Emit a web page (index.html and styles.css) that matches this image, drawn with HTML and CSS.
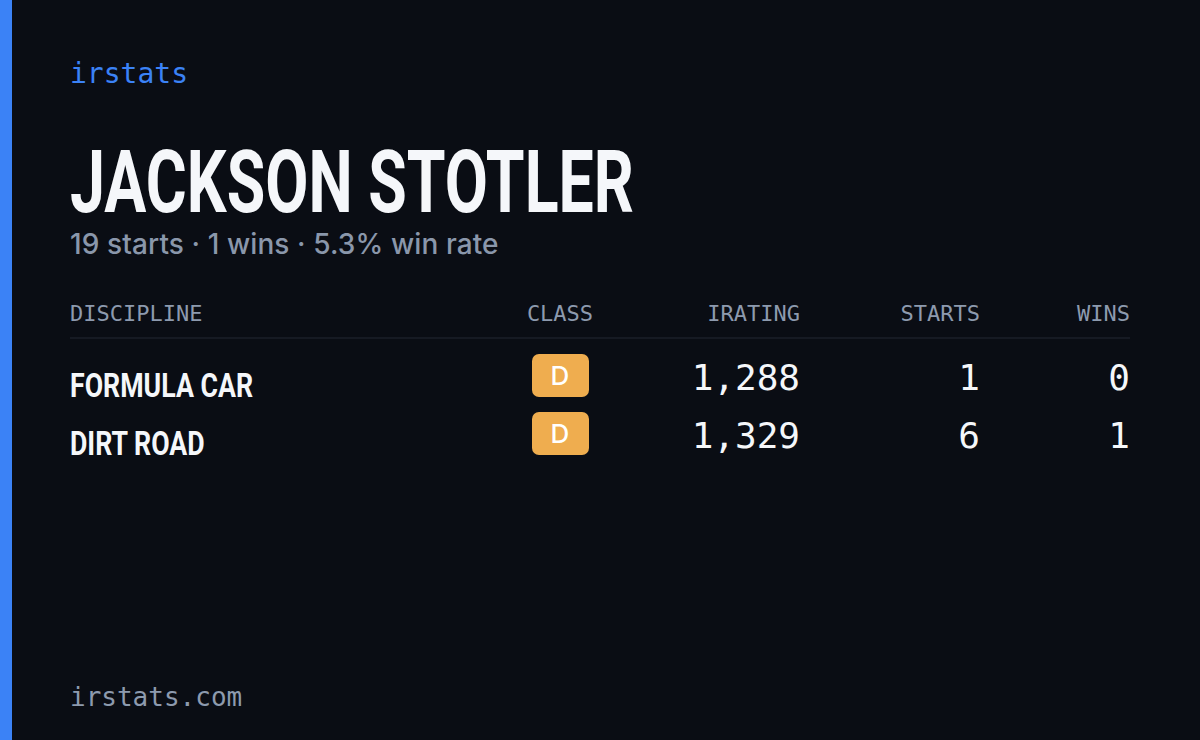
FILE: index.html
```html
<!DOCTYPE html>
<html lang="en">
<head>
<meta charset="utf-8">
<title>irstats — Jackson Stotler</title>
<link rel="stylesheet" href="styles.css">
</head>
<body>
<div class="card">
  <div class="accent"></div>
  <main class="content">
    <div class="logo">irstats</div>
    <h1 class="name"><span class="cond">JACKSON STOTLER</span></h1>
    <p class="summary">19 starts · 1 wins · 5.3% win rate</p>

    <div class="table">
      <div class="row head">
        <div class="cell">DISCIPLINE</div>
        <div class="cell center">CLASS</div>
        <div class="cell right">IRATING</div>
        <div class="cell right">STARTS</div>
        <div class="cell right">WINS</div>
      </div>
      <div class="body">
        <div class="row">
          <div class="cell disc"><span class="cond">FORMULA CAR</span></div>
          <div class="cell center"><span class="badge">D</span></div>
          <div class="cell right num">1,288</div>
          <div class="cell right num">1</div>
          <div class="cell right num">0</div>
        </div>
        <div class="row">
          <div class="cell disc"><span class="cond">DIRT ROAD</span></div>
          <div class="cell center"><span class="badge">D</span></div>
          <div class="cell right num">1,329</div>
          <div class="cell right num">6</div>
          <div class="cell right num">1</div>
        </div>
      </div>
    </div>

    <div class="footer">irstats.com</div>
  </main>
</div>
</body>
</html>
```

FILE: styles.css
```css
* { box-sizing: border-box; }

html, body {
  margin: 0;
  padding: 0;
  background: #0a0d14;
}

.card {
  width: 1200px;
  height: 740px;
  display: flex;
  background: #0a0d14;
  overflow: hidden;
}

.accent {
  width: 12px;
  flex: 0 0 12px;
  background: #3b82f6;
}

.content {
  flex: 1;
  display: flex;
  flex-direction: column;
  padding: 58px 70px 27px 58px;
}

.logo {
  font-family: "DejaVu Sans Mono", monospace;
  font-size: 28px;
  line-height: 32px;
  color: #3b82f6;
}

.name {
  margin: 49px 0 0;
  font-family: Roboto, "Liberation Sans", sans-serif;
  font-weight: 700;
  font-size: 87px;
  line-height: 87px;
  color: #f5f7fa;
  white-space: nowrap;
}

.cond {
  display: inline-block;
  transform: scaleX(0.72);
  transform-origin: left center;
  white-space: nowrap;
}

.summary {
  margin: 2px 0 0;
  font-family: Inter, "Noto Sans", sans-serif;
  font-weight: 500;
  font-size: 28px;
  line-height: 32px;
  letter-spacing: 0.1px;
  color: #8a97ab;
}

.table {
  margin-top: 41px;
}

.row {
  display: grid;
  grid-template-columns: 430px 120px 180px 180px 150px;
  align-items: center;
}

.head {
  font-family: "DejaVu Sans Mono", monospace;
  font-size: 22px;
  line-height: 26px;
  color: #8d9aae;
  padding-bottom: 10px;
  border-bottom: 2px solid #161a23;
}

.body {
  padding-top: 5px;
}

.body .row {
  height: 58px;
}

.center { text-align: center; }
.right { text-align: right; }

.disc {
  font-family: Roboto, "Liberation Sans", sans-serif;
  font-weight: 700;
  font-size: 33px;
  line-height: 40px;
  color: #f5f7fa;
  padding-top: 22px;
}

.disc .cond {
  transform: scaleX(0.81);
}

.num {
  font-family: "DejaVu Sans Mono", monospace;
  font-size: 36px;
  line-height: 42px;
  color: #f5f7fa;
  padding-top: 6px;
}

.badge {
  display: inline-flex;
  align-items: center;
  justify-content: center;
  width: 57px;
  height: 43px;
  border-radius: 7px;
  background: #efad4f;
  color: #ffffff;
  font-family: Inter, "Noto Sans", sans-serif;
  font-weight: 500;
  font-size: 26px;
  vertical-align: middle;
}

.footer {
  margin-top: auto;
  font-family: "DejaVu Sans Mono", monospace;
  font-size: 26px;
  line-height: 32px;
  color: #8d9aae;
}
```
